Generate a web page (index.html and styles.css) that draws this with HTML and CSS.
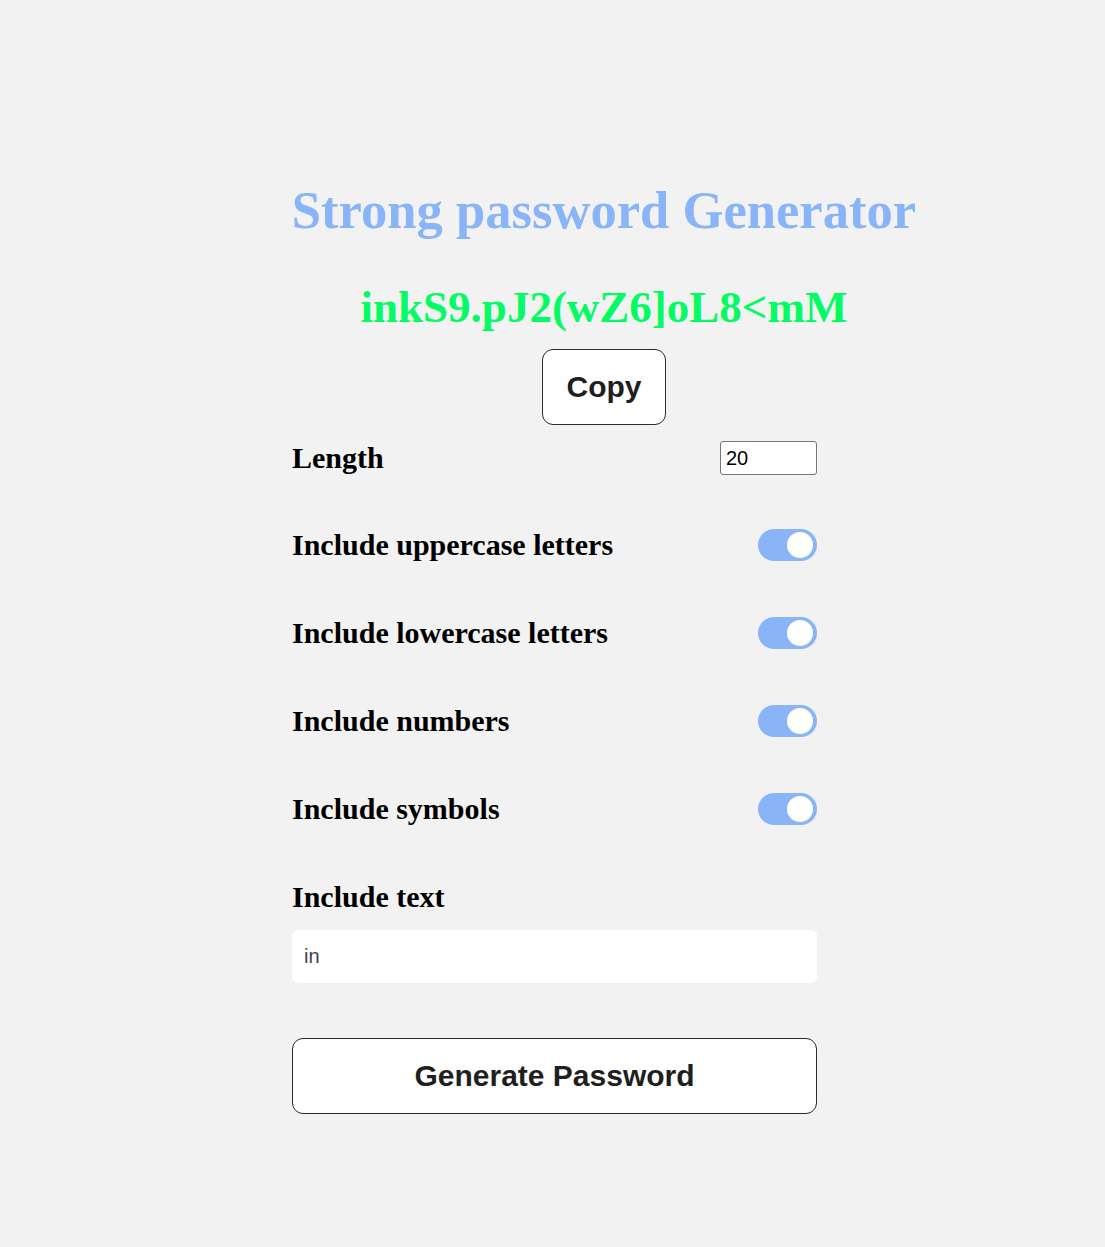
FILE: index.html
```html
<!DOCTYPE html>
<html lang="en">
<head>
<meta charset="utf-8">
<title>Strong password Generator</title>
<link rel="stylesheet" href="styles.css">
</head>
<body>
<main class="app">
  <header class="header">
    <h1 class="title">Strong password Generator</h1>
    <p class="password">inkS9.pJ2(wZ6]oL8&lt;mM</p>
    <button class="btn btn-copy" type="button">Copy</button>
  </header>
  <section class="options">
    <div class="row row-length">
      <label class="label" for="len">Length</label>
      <input class="num" id="len" type="number" value="20">
    </div>
    <div class="row">
      <span class="label">Include uppercase letters</span>
      <span class="toggle"><span class="knob"></span></span>
    </div>
    <div class="row">
      <span class="label">Include lowercase letters</span>
      <span class="toggle"><span class="knob"></span></span>
    </div>
    <div class="row">
      <span class="label">Include numbers</span>
      <span class="toggle"><span class="knob"></span></span>
    </div>
    <div class="row">
      <span class="label">Include symbols</span>
      <span class="toggle"><span class="knob"></span></span>
    </div>
    <div class="row">
      <span class="label">Include text</span>
    </div>
  </section>
  <input class="text-input" type="text" value="in">
  <button class="btn btn-generate" type="button">Generate Password</button>
</main>
</body>
</html>
```
FILE: styles.css
```css
html, body {
  margin: 0;
  padding: 0;
  background: #f2f2f2;
}
body {
  padding-left: 4px;
  font-family: "Liberation Serif", "Times New Roman", serif;
}
.app {
  width: 525px;
  margin: 0 auto;
  padding-top: 180px;
}
.header {
  width: 624px;
  display: flex;
  flex-direction: column;
  align-items: center;
}
.title {
  margin: 0;
  font-size: 52.6px;
  line-height: 60px;
  font-weight: bold;
  color: #8ab4f8;
  white-space: nowrap;
}
.password {
  margin: 42px 0 0;
  font-size: 45px;
  line-height: 50px;
  font-weight: bold;
  color: #05fb64;
  white-space: nowrap;
}
.btn {
  font-family: "Liberation Sans", Arial, sans-serif;
  font-weight: bold;
  font-size: 30px;
  color: #1f1f1f;
  background: #ffffff;
  border: 1px solid #2a2a2a;
  border-radius: 11px;
  box-sizing: border-box;
  height: 76px;
  padding: 0;
  cursor: pointer;
}
.btn-copy {
  margin-top: 17px;
  width: 124px;
}
.options {
  margin-top: 13px;
  display: flex;
  flex-direction: column;
  gap: 48px;
}
.row {
  height: 40px;
  display: flex;
  align-items: center;
  justify-content: space-between;
}
.row-length {
  height: 39px;
  align-items: flex-start;
}
.row-length .num {
  margin-top: 3px;
}
.label {
  font-size: 30px;
  line-height: 40px;
  font-weight: bold;
  color: #000;
}
.num {
  box-sizing: border-box;
  width: 97px;
  height: 34px;
  border: 1px solid #767676;
  border-radius: 3px;
  background: #fff;
  font-family: "Liberation Sans", Arial, sans-serif;
  font-size: 20px;
  padding: 0 5px;
  color: #000;
}
.toggle {
  width: 59px;
  height: 32px;
  border-radius: 16px;
  background: #8ab4f8;
  display: flex;
  align-items: center;
  justify-content: flex-end;
  padding-right: 4px;
  box-sizing: border-box;
}
.knob {
  width: 26px;
  height: 26px;
  border-radius: 50%;
  background: #fff;
}
.text-input {
  display: block;
  margin-top: 13px;
  box-sizing: border-box;
  width: 525px;
  height: 53px;
  border: none;
  border-radius: 6px;
  background: #fff;
  padding: 0 12px;
  font-family: "Liberation Sans", Arial, sans-serif;
  font-size: 20px;
  color: #3b3f52;
  outline: none;
}
.btn-generate {
  display: block;
  margin-top: 55px;
  width: 525px;
}
```
